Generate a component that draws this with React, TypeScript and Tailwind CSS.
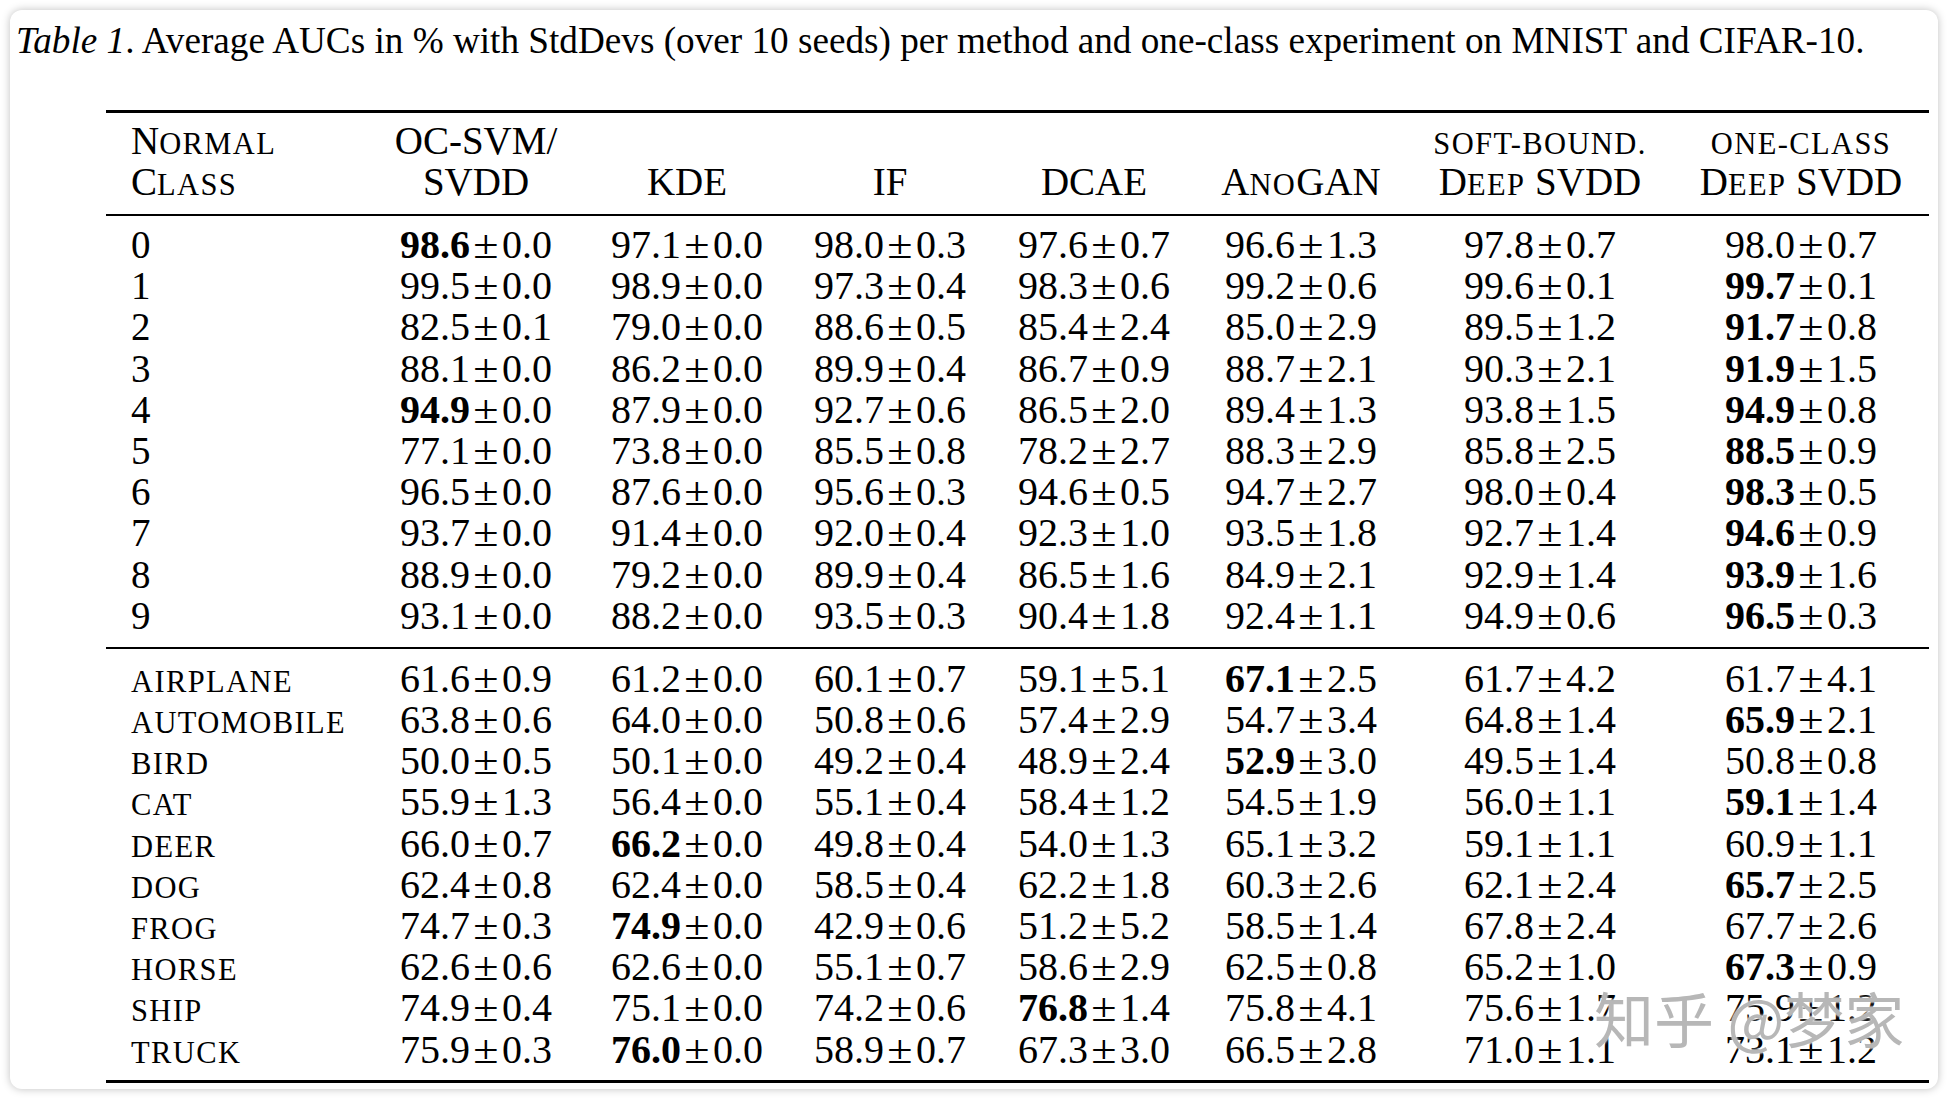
import React from "react";

type Cell = { v: string; sd: string; b?: boolean };

const c = (s: string): Cell => {
  const bold = s.startsWith("*");
  const clean = s.replace("*", "");
  const [v, sd] = clean.split("±");
  return { v, sd, b: bold };
};

const mnist: [string, string[]][] = [
  ["0", ["*98.6±0.0", "97.1±0.0", "98.0±0.3", "97.6±0.7", "96.6±1.3", "97.8±0.7", "98.0±0.7"]],
  ["1", ["99.5±0.0", "98.9±0.0", "97.3±0.4", "98.3±0.6", "99.2±0.6", "99.6±0.1", "*99.7±0.1"]],
  ["2", ["82.5±0.1", "79.0±0.0", "88.6±0.5", "85.4±2.4", "85.0±2.9", "89.5±1.2", "*91.7±0.8"]],
  ["3", ["88.1±0.0", "86.2±0.0", "89.9±0.4", "86.7±0.9", "88.7±2.1", "90.3±2.1", "*91.9±1.5"]],
  ["4", ["*94.9±0.0", "87.9±0.0", "92.7±0.6", "86.5±2.0", "89.4±1.3", "93.8±1.5", "*94.9±0.8"]],
  ["5", ["77.1±0.0", "73.8±0.0", "85.5±0.8", "78.2±2.7", "88.3±2.9", "85.8±2.5", "*88.5±0.9"]],
  ["6", ["96.5±0.0", "87.6±0.0", "95.6±0.3", "94.6±0.5", "94.7±2.7", "98.0±0.4", "*98.3±0.5"]],
  ["7", ["93.7±0.0", "91.4±0.0", "92.0±0.4", "92.3±1.0", "93.5±1.8", "92.7±1.4", "*94.6±0.9"]],
  ["8", ["88.9±0.0", "79.2±0.0", "89.9±0.4", "86.5±1.6", "84.9±2.1", "92.9±1.4", "*93.9±1.6"]],
  ["9", ["93.1±0.0", "88.2±0.0", "93.5±0.3", "90.4±1.8", "92.4±1.1", "94.9±0.6", "*96.5±0.3"]],
];

const cifar: [string, string[]][] = [
  ["AIRPLANE", ["61.6±0.9", "61.2±0.0", "60.1±0.7", "59.1±5.1", "*67.1±2.5", "61.7±4.2", "61.7±4.1"]],
  ["AUTOMOBILE", ["63.8±0.6", "64.0±0.0", "50.8±0.6", "57.4±2.9", "54.7±3.4", "64.8±1.4", "*65.9±2.1"]],
  ["BIRD", ["50.0±0.5", "50.1±0.0", "49.2±0.4", "48.9±2.4", "*52.9±3.0", "49.5±1.4", "50.8±0.8"]],
  ["CAT", ["55.9±1.3", "56.4±0.0", "55.1±0.4", "58.4±1.2", "54.5±1.9", "56.0±1.1", "*59.1±1.4"]],
  ["DEER", ["66.0±0.7", "*66.2±0.0", "49.8±0.4", "54.0±1.3", "65.1±3.2", "59.1±1.1", "60.9±1.1"]],
  ["DOG", ["62.4±0.8", "62.4±0.0", "58.5±0.4", "62.2±1.8", "60.3±2.6", "62.1±2.4", "*65.7±2.5"]],
  ["FROG", ["74.7±0.3", "*74.9±0.0", "42.9±0.6", "51.2±5.2", "58.5±1.4", "67.8±2.4", "67.7±2.6"]],
  ["HORSE", ["62.6±0.6", "62.6±0.0", "55.1±0.7", "58.6±2.9", "62.5±0.8", "65.2±1.0", "*67.3±0.9"]],
  ["SHIP", ["74.9±0.4", "75.1±0.0", "74.2±0.6", "*76.8±1.4", "75.8±4.1", "75.6±1.7", "75.9±1.2"]],
  ["TRUCK", ["75.9±0.3", "*76.0±0.0", "58.9±0.7", "67.3±3.0", "66.5±2.8", "71.0±1.1", "73.1±1.2"]],
];

const grid =
  "grid grid-cols-[265px_210px_212px_194px_214px_200px_278px_244px]";

// small caps piece
function Sc({ children }: { children: React.ReactNode }) {
  return <span className="text-[30.5px] tracking-[1.4px]">{children}</span>;
}

function Row({ label, vals, small }: { label: string; vals: string[]; small?: boolean }) {
  return (
    <div className={`${grid} h-[41.2px] items-baseline leading-[41.2px]`}>
      <div className="pl-[25px]">{small ? <Sc>{label}</Sc> : label}</div>
      {vals.map((s, i) => {
        const x = c(s);
        return (
          <div key={i} className="whitespace-nowrap text-center text-[40px]">
            <span className={x.b ? "font-bold" : ""}>{x.v}</span>
            <span className="inline-block scale-x-[1.15] px-[5px]">±</span>
            {x.sd}
          </div>
        );
      })}
    </div>
  );
}

function Head({ top, bottom }: { top?: React.ReactNode; bottom: React.ReactNode }) {
  return (
    <div className="flex flex-col items-center">
      <div className="h-[41px] leading-[41px]">{top}</div>
      <div className="h-[41px] leading-[41px]">{bottom}</div>
    </div>
  );
}

export default function App() {
  return (
    <div className="min-h-screen bg-white p-[10px] font-['Liberation_Serif','Times_New_Roman',serif] text-black">
      <div className="relative h-[1079px] w-[1928px] rounded-[12px] bg-white pl-[6px] pt-[9px] shadow-[0_0_9px_rgba(0,0,0,0.25)]">
        <p className="h-[44px] whitespace-nowrap text-[37.2px] leading-[44px]">
          <i>Table 1</i>. Average AUCs in % with StdDevs (over 10 seeds) per method and one-class experiment on MNIST and CIFAR-10.
        </p>

        <div className="ml-[90px] mt-[47px] w-[1823px] text-[39px]">
          <div className="border-t-[3px] border-black" />
          <div className={`${grid} pb-[12px] pt-[7px]`}>
            <div className="pl-[25px]">
              <div className="h-[41px] leading-[41px]">
                N<Sc>ORMAL</Sc>
              </div>
              <div className="h-[41px] leading-[41px]">
                C<Sc>LASS</Sc>
              </div>
            </div>
            <Head top="OC-SVM/" bottom="SVDD" />
            <Head bottom="KDE" />
            <Head bottom="IF" />
            <Head bottom="DCAE" />
            <Head
              bottom={
                <>
                  A<Sc>NO</Sc>GAN
                </>
              }
            />
            <Head
              top={<Sc>SOFT-BOUND.</Sc>}
              bottom={
                <>
                  D<Sc>EEP</Sc> SVDD
                </>
              }
            />
            <Head
              top={<Sc>ONE-CLASS</Sc>}
              bottom={
                <>
                  D<Sc>EEP</Sc> SVDD
                </>
              }
            />
          </div>
          <div className="border-t-[2px] border-black" />
          <div className="pb-[11px] pt-[8px]">
            {mnist.map(([l, v]) => (
              <Row key={l} label={l} vals={v} />
            ))}
          </div>
          <div className="border-t-[2px] border-black" />
          <div className="pb-[10px] pt-[9px]">
            {cifar.map(([l, v]) => (
              <Row key={l} label={l} vals={v} small />
            ))}
          </div>
          <div className="border-t-[3px] border-black" />
        </div>

        {/* watermark */}
        <div className="absolute left-[1584px] top-[973px] whitespace-nowrap font-['Noto_Sans_CJK_SC',sans-serif] text-[60px] leading-[68px] text-[rgba(165,165,165,0.8)] [text-shadow:0_0_2px_#fff,0_0_3px_#fff]">
          知乎 @梦家
        </div>
      </div>
    </div>
  );
}
